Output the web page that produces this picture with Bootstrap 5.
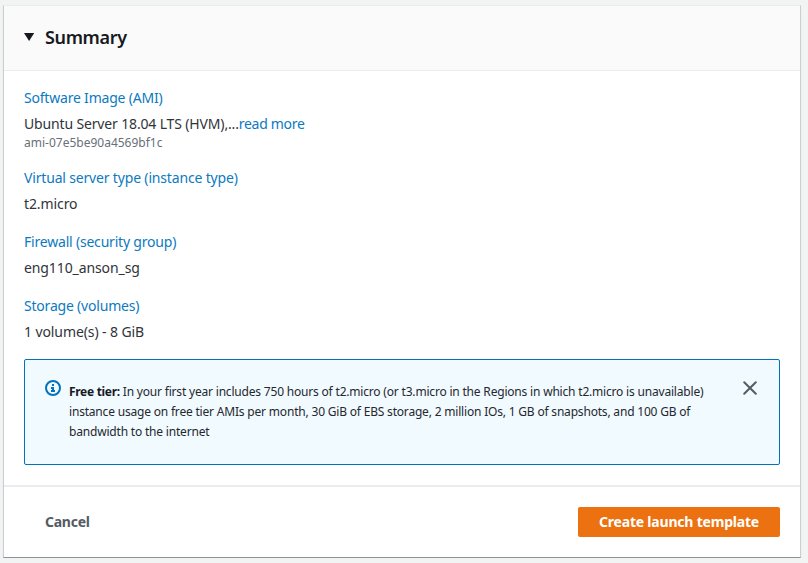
<!DOCTYPE html>
<html lang="en">
<head>
<meta charset="utf-8">
<title>Summary</title>
<link href="https://cdn.jsdelivr.net/npm/bootstrap@5.3.0/dist/css/bootstrap.min.css" rel="stylesheet">
<style>
body{background:#f2f3f3;font-family:"Noto Sans",sans-serif;font-size:14px;line-height:22px;color:#16191f;overflow:hidden}
.summary-panel{width:798px;height:553px;margin:5px 0 0 3px;border:1px solid #c9d0d3;border-top-color:#eaeded;border-bottom-color:#879596;border-radius:0;box-shadow:0 1px 1px #d5dbdb;--bs-card-color:#30343a}
.summary-panel .card-header{height:65px;background:#fafafa;border-bottom:1px solid #eaeded;padding:0 20px 3px;border-radius:0;color:#16191f}
.summary-panel h1{font-size:18px;line-height:22px;font-weight:600;letter-spacing:-.35px}
.summary-panel .card-body{padding:16px 20px 0}
.summary-panel .card-footer{height:72px;background:#fff;border-top:2px solid #eaeded;padding:0 20px 1px 41px;border-radius:0}
a{color:#0073bb;text-decoration:none}
.group{margin-bottom:16px;letter-spacing:-.1px}
.group-title{margin-bottom:4px;letter-spacing:-.2px}
.group-title a,.ami-line a{color:#0c7abf}
.group-title-wide{letter-spacing:-.17px}
.ami-line{letter-spacing:-.15px}
.ami-line a{letter-spacing:-.3px}
.ami-id{font-size:12px;line-height:16px;color:#687078;letter-spacing:0}
.tier-note{height:106px;background:#f1faff;border:1px solid #0073bb;border-radius:2px;padding:20px;margin:16px 0 0;color:#25282e;font-size:12px;line-height:20px;letter-spacing:-.19px}
.tier-text{padding-top:2px;white-space:nowrap}
.tier-text strong{letter-spacing:-.3px;color:#16191f}
.close-icon{margin-right:1px}
.create-btn{background:#ec7211;border-radius:2px;font-size:14px;line-height:20px;padding:5px 0;width:202px;height:30px;color:#fff;white-space:nowrap;letter-spacing:-.2px}
.cancel-btn{font-size:14px;color:#545b64;letter-spacing:-.25px}
</style>
</head>
<body>
<main class="card summary-panel">
<header class="card-header d-flex align-items-center">
<svg class="me-2" width="13" height="10" viewBox="0 0 13 10"><path d="M0 1h10.2L5.1 9z" fill="#16191f"/></svg>
<h1 class="mb-0">Summary</h1>
</header>
<div class="card-body">
<section class="group"><div class="group-title"><a href="#">Software Image (AMI)</a></div><div class="ami-line">Ubuntu Server 18.04 LTS (HVM),...<a href="#">read more</a></div><div class="ami-id">ami-07e5be90a4569bf1c</div></section>
<section class="group"><div class="group-title group-title-wide"><a href="#">Virtual server type (instance type)</a></div><div>t2.micro</div></section>
<section class="group"><div class="group-title"><a href="#">Firewall (security group)</a></div><div>eng110_anson_sg</div></section>
<section class="group"><div class="group-title"><a href="#">Storage (volumes)</a></div><div>1 volume(s) - 8 GiB</div></section>
<div class="alert tier-note d-flex" role="alert">
<svg class="flex-shrink-0 me-2" width="16" height="16" viewBox="0 0 16 16" fill="none" stroke="#0073bb" stroke-width="2"><circle cx="8" cy="8" r="7"/><path d="M8 11V8H6M10 11H6M8 6V4"/></svg>
<div class="flex-grow-1 tier-text"><strong>Free tier:</strong> In your first year includes 750 hours of t2.micro (or t3.micro in the Regions in which t2.micro is unavailable)<br>instance usage on free tier AMIs per month, 30 GiB of EBS storage, 2 million IOs, 1 GB of snapshots, and 100 GB of<br>bandwidth to the internet</div>
<svg class="close-icon flex-shrink-0" width="16" height="16" viewBox="0 0 16 16" stroke="#545b64" stroke-width="2" stroke-linecap="round"><path d="M2.2 2.2l11.6 11.6M13.8 2.2L2.2 13.8"/></svg>
</div>
</div>
<footer class="card-footer d-flex align-items-center justify-content-between"><button class="btn cancel-btn fw-bold p-0 border-0">Cancel</button><button class="btn create-btn fw-bold border-0">Create launch template</button></footer>
</main>
<script src="https://cdn.jsdelivr.net/npm/bootstrap@5.3.0/dist/js/bootstrap.bundle.min.js"></script>
</body>
</html>
